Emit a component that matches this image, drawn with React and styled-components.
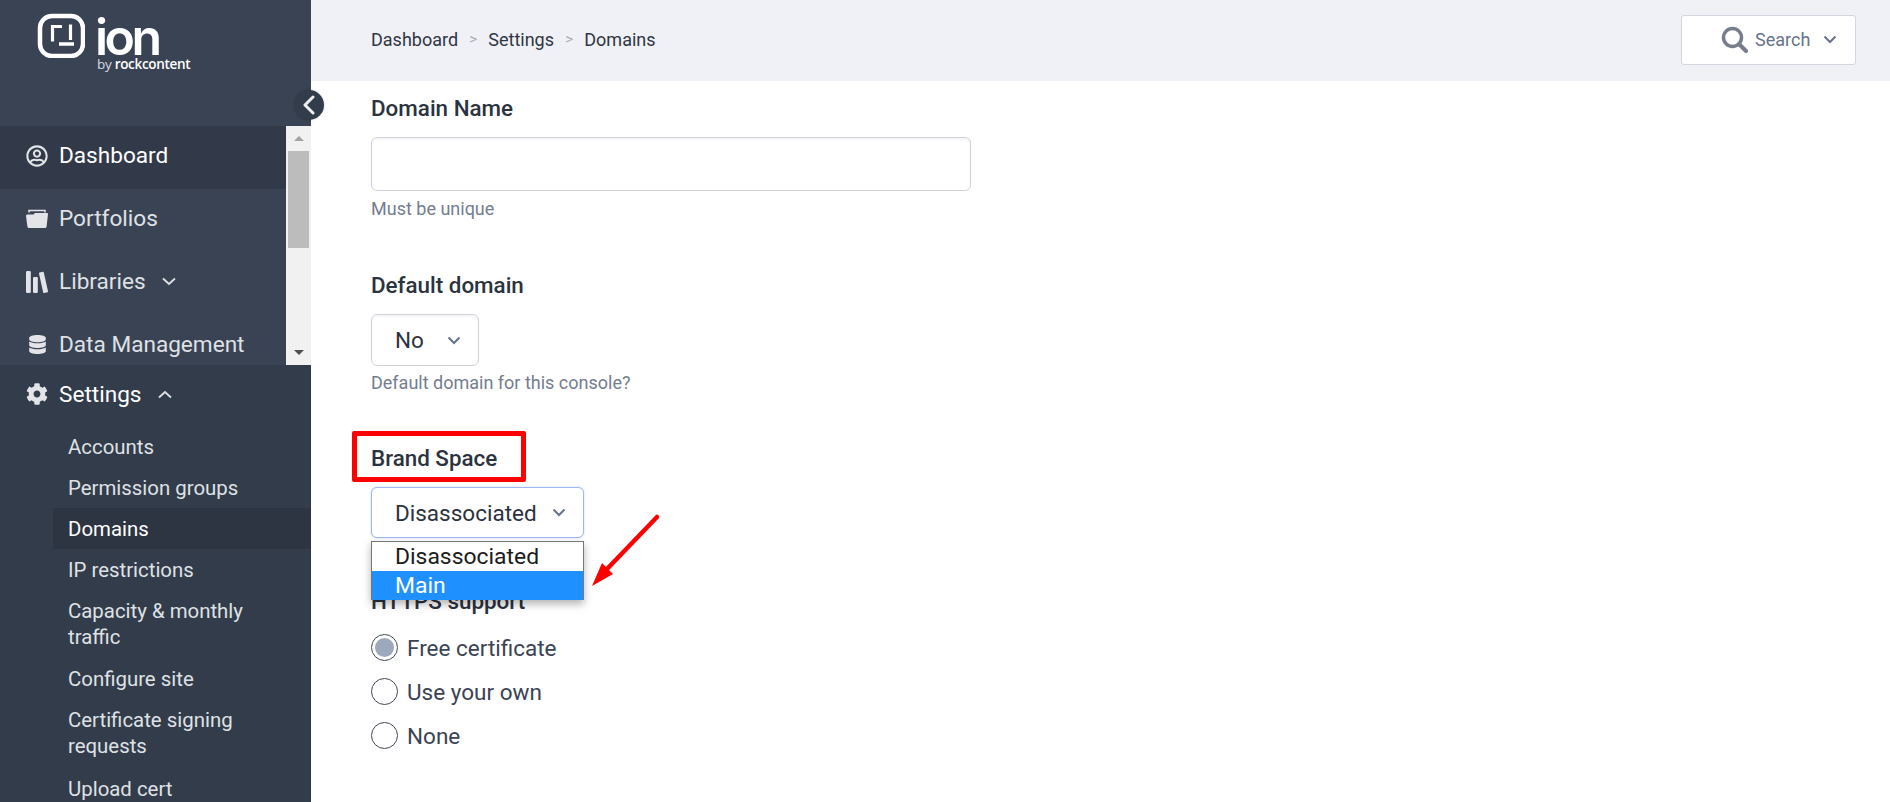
import React from "react";
import styled, { createGlobalStyle } from "styled-components";
import { FaCog, FaDatabase, FaRegUserCircle } from "react-icons/fa";

const Global = createGlobalStyle`
  html, body { margin: 0; padding: 0; height: 100%; overflow: hidden; background: #fff; }
  body { font-family: Roboto, "Liberation Sans", sans-serif; }
  * { box-sizing: border-box; }
`;

const Page = styled.div`
  display: flex;
  width: 1890px;
  height: 802px;
  overflow: hidden;
`;

const Sidebar = styled.aside`
  position: relative;
  flex: 0 0 311px;
  height: 802px;
  background: #333c4b;
  z-index: 2;
`;

const Brand = styled.div`
  height: 126px;
  background: #3a4354;
  padding: 13px 0 0 37px;
  display: flex;
  align-items: flex-start;
  gap: 12px;
`;

const BrandText = styled.div`
  display: flex;
  flex-direction: column;
  color: #fff;
`;

const BrandName = styled.span`
  font-family: Inter, sans-serif;
  font-size: 50px;
  line-height: 38px;
  height: 38px;
  margin-top: 5px;
  font-weight: 600;
  letter-spacing: -3.5px;
  margin-left: -2px;
`;

const BrandBy = styled.span`
  font-family: "Open Sans", sans-serif;
  font-size: 13.5px;
  line-height: 16px;
  letter-spacing: -0.3px;
  white-space: nowrap;
  b { font-weight: 600; }
  i { font-style: normal; font-weight: 400; color: #d8dbe0; }
`;

const Collapse = styled.button`
  position: absolute;
  top: 90px;
  left: 294px;
  width: 30px;
  height: 30px;
  padding: 0;
  border: 0;
  border-radius: 50%;
  background: #333c4b;
  box-shadow: 0 0 2px rgba(0, 0, 0, 0.25);
  display: flex;
  align-items: center;
  justify-content: center;
`;

const TopNav = styled.nav`
  display: flex;
  height: 239px;
  background: #3a4354;
  overflow: hidden;
`;

const TopList = styled.div`
  flex: 1;
  display: flex;
  flex-direction: column;
`;

const TopItem = styled.div`
  flex: 0 0 ${(p) => (p.$last ? "51px" : "63px")};
  height: ${(p) => (p.$last ? "51px" : "63px")};
  display: flex;
  align-items: center;
  padding: ${(p) => (p.$last ? "8px" : "0")} 0 ${(p) => (p.$last ? "0" : "4px")} 26px;
  gap: 11px;
  background: ${(p) => (p.$active ? "#323a49" : "transparent")};
  color: ${(p) => (p.$active ? "#ffffff" : "#dfe1e5")};
  font-size: 22.6px;
  white-space: nowrap;
`;

const NavIcon = styled.span`
  flex: 0 0 22px;
  width: 22px;
  height: 24px;
  display: flex;
  align-items: center;
  justify-content: center;
  color: #e2e4e7;
  font-size: 22px;
`;

const Caret = styled.svg`
  width: 14px;
  height: 9px;
  margin-left: 5px;
  fill: none;
  stroke: #dfe1e5;
  stroke-width: 1.8;
`;

const Scrollbar = styled.div`
  flex: 0 0 25px;
  padding: 0 2px;
  background: #f1f1f1;
  display: flex;
  flex-direction: column;
  align-items: stretch;
`;

const ScrollArrow = styled.div`
  height: 25px;
  display: flex;
  align-items: center;
  justify-content: center;
  &::before {
    content: "";
    border-left: 5px solid transparent;
    border-right: 5px solid transparent;
    ${(p) => (p.$up ? "border-bottom: 5px solid #a3a3a3;" : "border-top: 5px solid #505050;")}
  }
`;

const ScrollThumb = styled.div`
  height: 97px;
  background: #bcbcbc;
`;

const ScrollTrack = styled.div`
  flex: 1;
`;

const SettingsHead = styled.div`
  height: 58px;
  display: flex;
  align-items: center;
  padding-left: 26px;
  gap: 11px;
  color: #fff;
  font-size: 22.6px;
`;

const SubList = styled.div`
  margin-top: 3px;
  display: flex;
  flex-direction: column;
  padding-left: 53px;
`;

const SubItem = styled.div`
  padding: 7.5px 16px 7.5px 15px;
  margin-bottom: ${(p) => (p.$wrapped ? "1.5px" : "0")};
  font-size: 20.4px;
  line-height: 26px;
  color: ${(p) => (p.$active ? "#ffffff" : "#dfe1e5")};
  background: ${(p) => (p.$active ? "#2e3542" : "transparent")};
`;

const Main = styled.main`
  flex: 1;
  min-width: 0;
  position: relative;
  display: flex;
  flex-direction: column;
`;

const Header = styled.header`
  height: 81px;
  flex: 0 0 81px;
  background: #f0f1f6;
  padding: 0 34px 0 60px;
  display: flex;
  align-items: center;
  justify-content: space-between;
`;

const Crumbs = styled.div`
  display: flex;
  align-items: center;
  gap: 11.2px;
  font-size: 18px;
  color: #2f3644;
  padding-bottom: 3px;
`;

const Sep = styled.span`
  color: #a7acb8;
  font-size: 15px;
`;

const SearchBox = styled.div`
  width: 175px;
  height: 50px;
  margin-top: -2px;
  background: #fff;
  border: 1px solid #d3d6e0;
  border-radius: 3px;
  display: flex;
  align-items: center;
  padding-left: 39px;
  color: #67738a;
  font-size: 18px;
`;

const SearchIcon = styled.svg`
  width: 27px;
  height: 27px;
  margin-right: 7px;
  fill: none;
  stroke: #767e8e;
`;

const Chevron = styled.svg`
  width: 14px;
  height: 9px;
  fill: none;
  stroke: #67738a;
  stroke-width: 2;
  margin-left: ${(p) => p.$gap || 0}px;
  flex: none;
`;

const Form = styled.div`
  padding: 14px 0 0 60px;
  display: flex;
  flex-direction: column;
`;

const Field = styled.div`
  display: flex;
  flex-direction: column;
  align-items: flex-start;
  margin-bottom: ${(p) => p.$mb || 0}px;
  position: relative;
`;

const Label = styled.div`
  font-size: 22.4px;
  font-weight: 500;
  line-height: 26px;
  color: #2b3240;
  margin-bottom: 16px;
`;

const TextInput = styled.div`
  width: 600px;
  height: 54px;
  margin-bottom: 1px;
  background: #fff;
  border: 1px solid #ced2de;
  border-radius: 6px;
  box-shadow: inset 0 2px 2px rgba(0, 0, 0, 0.04);
`;

const Hint = styled.div`
  margin-top: 7px;
  font-size: 18px;
  line-height: 20px;
  color: #737d90;
`;

const SelectBox = styled.div`
  width: ${(p) => p.$w}px;
  height: ${(p) => (p.$focus ? 51 : 52)}px;
  background: #fff;
  border: 1px solid ${(p) => (p.$focus ? "#9db8f2" : "#ced2de")};
  border-radius: 6px;
  box-shadow: ${(p) => (p.$focus ? "0 0 2px rgba(120,150,230,.45)" : "inset 0 2px 2px rgba(0,0,0,.04)")};
  display: flex;
  align-items: center;
  padding-left: 23px;
  font-size: 22.5px;
  color: #2b3240;
`;

const Popup = styled.ul`
  position: absolute;
  top: 96px;
  left: 0;
  width: 213px;
  height: 59px;
  margin: 0;
  padding: 0;
  list-style: none;
  background: #fff;
  border: 1px solid #767676;
  border-bottom: 0;
  box-shadow: 0 4px 8px rgba(0, 0, 0, 0.3);
  z-index: 3;
`;

const PopupItem = styled.li`
  height: 29px;
  line-height: 29px;
  padding-left: 23px;
  font-size: 22.9px;
  color: ${(p) => (p.$active ? "#fff" : "#1c1c1c")};
  background: ${(p) => (p.$active ? "#1e90ff" : "#fff")};
`;

const RadioGroup = styled.div`
  display: flex;
  flex-direction: column;
  gap: 17px;
  margin-top: 4px;
`;

const RadioRow = styled.div`
  display: flex;
  align-items: center;
  gap: 9px;
  height: 27px;
  font-size: 22.5px;
  color: #3a4354;
`;

const RadioDot = styled.span`
  width: 27px;
  height: 27px;
  border-radius: 50%;
  border: 1px solid #3f4756;
  background: #fff;
  display: flex;
  align-items: center;
  justify-content: center;
  &::after {
    content: "";
    width: 19px;
    height: 19px;
    border-radius: 50%;
    background: ${(p) => (p.$on ? "#9ea8bc" : "transparent")};
  }
`;

const Highlight = styled.div`
  position: absolute;
  left: 41px;
  top: 431px;
  width: 174px;
  height: 51px;
  border: 5px solid #ff0000;
  border-radius: 2px;
  pointer-events: none;
`;

const Arrow = styled.svg`
  position: absolute;
  left: 280px;
  top: 510px;
  width: 90px;
  height: 90px;
  z-index: 4;
`;

const Logo = () => (
  <svg width="48" height="45" viewBox="0 0 48 45" fill="none">
    <rect x="3" y="3" width="43" height="40" rx="12" stroke="#fff" strokeWidth="4.5" />
    <path d="M15.500 28.500V13.500H25" stroke="#fff" strokeWidth="3.200" />
    <path d="M33.500 11.500V27" stroke="#fff" strokeWidth="3.200" />
    <path d="M22 31H37" stroke="#fff" strokeWidth="3.500" />
  </svg>
);

const FolderIcon = () => (
  <svg width="22" height="19" viewBox="0 0 22 19">
    <path d="M3 3.500V1.500h16v2" fill="none" stroke="#e2e4e7" strokeWidth="1.500" />
    <path d="M0 7c0-1 .6-1.600 1.500-1.600h6L9 4h12c.6 0 1 .4 1 1l-1.400 12.500c-.1.900-.7 1.500-1.600 1.500H3c-.9 0-1.500-.6-1.600-1.500z" fill="#e2e4e7" />
  </svg>
);

const BooksIcon = () => (
  <svg width="22" height="22" viewBox="0 0 22 22" fill="#e2e4e7">
    <rect x="0" y="0" width="4.800" height="22" rx="1.200" />
    <rect x="7" y="6" width="4.800" height="16" rx="1.200" />
    <path d="M13.600 1.500 16.800.8c.5-.1.900.1 1 .6L22 20.300c.1.500-.2.900-.6 1l-3.200.7c-.5.100-.9-.2-1-.6L13 2.500c-.1-.5.100-.9.600-1z" />
  </svg>
);

const Down = ({ gap }) => (
  <Chevron viewBox="0 0 14 9" $gap={gap}><path d="M1.500 1.500 7 7l5.500-5.500" /></Chevron>
);

export default function App() {
  return (
    <Page>
      <Global />
      <Sidebar>
        <Brand>
          <Logo />
          <BrandText>
            <BrandName>ion</BrandName>
            <BrandBy><i>by</i> <b>rockcontent</b></BrandBy>
          </BrandText>
        </Brand>
        <Collapse aria-label="collapse">
          <svg width="14" height="20" viewBox="0 0 14 20" fill="none">
            <path d="M11 2 3 10l8 8" stroke="#eceef0" strokeWidth="3" strokeLinecap="round" strokeLinejoin="round" />
          </svg>
        </Collapse>
        <TopNav>
          <TopList>
            <TopItem $active><NavIcon><FaRegUserCircle /></NavIcon>Dashboard</TopItem>
            <TopItem><NavIcon><FolderIcon /></NavIcon>Portfolios</TopItem>
            <TopItem>
              <NavIcon><BooksIcon /></NavIcon>Libraries
              <Caret viewBox="0 0 14 9"><path d="M1 1.500 7 7l6-5.500" /></Caret>
            </TopItem>
            <TopItem $last><NavIcon><FaDatabase size={19} /></NavIcon>Data Management</TopItem>
          </TopList>
          <Scrollbar>
            <ScrollArrow $up />
            <ScrollThumb />
            <ScrollTrack />
            <ScrollArrow />
          </Scrollbar>
        </TopNav>
        <SettingsHead>
          <NavIcon><FaCog /></NavIcon>Settings
          <Caret viewBox="0 0 14 9"><path d="M1 7.500 7 2l6 5.500" /></Caret>
        </SettingsHead>
        <SubList>
          <SubItem>Accounts</SubItem>
          <SubItem>Permission groups</SubItem>
          <SubItem $active>Domains</SubItem>
          <SubItem>IP restrictions</SubItem>
          <SubItem $wrapped>Capacity &amp; monthly traffic</SubItem>
          <SubItem>Configure site</SubItem>
          <SubItem $wrapped>Certificate signing requests</SubItem>
          <SubItem>Upload cert</SubItem>
        </SubList>
      </Sidebar>
      <Main>
        <Header>
          <Crumbs>
            <span>Dashboard</span><Sep>&gt;</Sep><span>Settings</span><Sep>&gt;</Sep><span>Domains</span>
          </Crumbs>
          <SearchBox>
            <SearchIcon viewBox="0 0 27 27">
              <circle cx="11.500" cy="11.500" r="9" strokeWidth="3.500" />
              <path d="M18 18l7 7" strokeWidth="4" strokeLinecap="round" />
            </SearchIcon>
            Search
            <Down gap={13} />
          </SearchBox>
        </Header>
        <Form>
          <Field $mb={53}>
            <Label>Domain Name</Label>
            <TextInput />
            <Hint>Must be unique</Hint>
          </Field>
          <Field $mb={52}>
            <Label>Default domain</Label>
            <SelectBox $w={108}>No<Down gap={23} /></SelectBox>
            <Hint>Default domain for this console?</Hint>
          </Field>
          <Field $mb={50}>
            <Label>Brand Space</Label>
            <SelectBox $w={213} $focus>Disassociated<Down gap={15} /></SelectBox>
            <Popup>
              <PopupItem>Disassociated</PopupItem>
              <PopupItem $active>Main</PopupItem>
            </Popup>
          </Field>
          <Field>
            <Label>HTTPS support</Label>
            <RadioGroup>
              <RadioRow><RadioDot $on />Free certificate</RadioRow>
              <RadioRow><RadioDot />Use your own</RadioRow>
              <RadioRow><RadioDot />None</RadioRow>
            </RadioGroup>
          </Field>
        </Form>
        <Highlight />
        <Arrow viewBox="0 0 90 90">
          <path d="M66 7 16 59" stroke="#ff0000" strokeWidth="4.500" strokeLinecap="round" />
          <path d="M1 76 11 53 22 64z" fill="#ff0000" />
        </Arrow>
      </Main>
    </Page>
  );
}
